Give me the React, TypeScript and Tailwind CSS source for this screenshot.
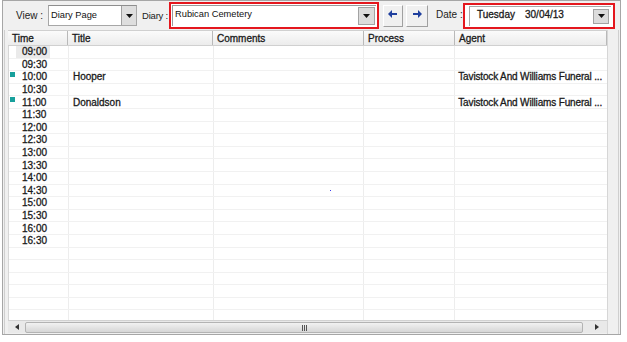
import React from "react";

const TIMES = [
  "09:00","09:30","10:00","10:30","11:00","11:30","12:00","12:30",
  "13:00","13:30","14:00","14:30","15:00","15:30","16:00","16:30",
];
const AGENT = "Tavistock And Williams Funeral ...";
const DATA: Record<string, { title: string; agent: string }> = {
  "10:00": { title: "Hooper", agent: AGENT },
  "11:00": { title: "Donaldson", agent: AGENT },
};
const TOTAL_ROWS = 22;

function DownTri() {
  return (
    <svg width="7" height="4" viewBox="0 0 7 4">
      <polygon points="0,0 7,0 3.5,4" fill="#111" />
    </svg>
  );
}

function Arrow({ dir }: { dir: "left" | "right" }) {
  return (
    <svg width="10" height="8" viewBox="0 0 10 8">
      {dir === "left" ? (
        <g fill="#1f3f9e">
          <polygon points="0,4 4,0 4,8" />
          <rect x="3" y="3" width="6" height="2" />
        </g>
      ) : (
        <g fill="#1f3f9e">
          <polygon points="10,4 6,0 6,8" />
          <rect x="1" y="3" width="6" height="2" />
        </g>
      )}
    </svg>
  );
}

const strong = "text-[10px] leading-none text-[#1a1a1a] [-webkit-text-stroke:0.3px_#1a1a1a] whitespace-nowrap";
const label = "text-[10px] leading-none text-[#222] whitespace-nowrap";

export default function App() {
  const rows = Array.from({ length: TOTAL_ROWS }, (_, i) => TIMES[i] ?? "");
  return (
    <div className="w-[627px] h-[342px] bg-white font-['Liberation_Sans',Arial,sans-serif]">
      <div className="ml-[2px] w-[619px] h-[335px] border border-[#a6a6a6] bg-[#f0f0f0] flex flex-col">
        {/* Toolbar */}
        <div className="h-[29px] flex items-center">
          <div className={`ml-[13px] w-[32px] ${label}`}>View :</div>
          <div className="w-[89px] h-[21px] bg-white border border-[#a7a7a7] border-t-[#8e8e8e] flex items-stretch">
            <div className="flex-1 pl-[2px] flex items-center text-[9.3px] text-[#111] whitespace-nowrap">Diary Page</div>
            <div className="w-[15px] bg-[#dedede] border-l border-[#a0a0a0] flex items-center justify-center">
              <DownTri />
            </div>
          </div>
          <div className="ml-[5px] w-[27px] text-[9.5px] tracking-[-0.2px] leading-none text-[#222] whitespace-nowrap">Diary :</div>
          <div className="w-[210px] h-[27px] border-2 border-[#e4171e] bg-white flex p-[1px]">
            <div className="flex-1 border-l border-t border-[#9a9a9a] flex items-stretch">
              <div className="flex-1 pl-[2px] pb-[3px] flex items-center text-[9.3px] text-[#111] whitespace-nowrap">Rubican Cemetery</div>
              <div className="w-[17px] my-[1px] mr-[1px] bg-[#dcdcdc] border border-[#a3a3a3] flex items-center justify-center">
                <DownTri />
              </div>
            </div>
          </div>
          <div className="ml-[4px] w-[20px] h-[22px] bg-[#f0f0f0] border border-t-white border-l-white border-r-[#a0a0a0] border-b-[#a0a0a0] flex items-center justify-center pb-[4px]">
            <Arrow dir="left" />
          </div>
          <div className="ml-[3px] w-[22px] h-[22px] bg-[#f0f0f0] border border-t-white border-l-white border-r-[#a0a0a0] border-b-[#a0a0a0] flex items-center justify-center pb-[4px]">
            <Arrow dir="right" />
          </div>
          <div className={`ml-[8px] w-[27px] pb-[2px] ${label}`}>Date :</div>
          <div className="w-[152px] h-[26px] border-2 border-[#e4171e] bg-white flex pl-[4px] pr-[2px] py-[1px]">
            <div className="flex-1 border-l border-t border-[#a8a8a8] flex items-stretch">
              <div className={`flex-1 pl-[7px] pb-[2px] flex items-center ${strong}`}>
                <span>Tuesday</span>
                <span className="ml-[10px]">30/04/13</span>
              </div>
              <div className="w-[16px] my-[2px] mr-[2px] bg-[#dcdcdc] border border-[#a3a3a3] flex items-center justify-center">
                <DownTri />
              </div>
            </div>
          </div>
        </div>

        {/* Grid frame */}
        <div className="flex-1 ml-[1px] mr-[1px] border-l border-r border-[#cfcfcf] flex">
          <div className="ml-[3px] w-[599px] flex flex-col">
            {/* Header */}
            <div className="h-[16px] flex border-t border-b border-[#d0d0d0] bg-linear-to-b from-[#fbfbfb] to-[#ececec]">
              {[
                ["Time", 60],
                ["Title", 145],
                ["Comments", 151],
                ["Process", 91],
                ["Agent", 152],
              ].map(([t, w]) => (
                <div
                  key={t as string}
                  style={{ width: w as number }}
                  className={`flex items-center pl-[4px] pt-[1px] border-r border-[#b9b9b9] ${strong}`}
                >
                  {t}
                </div>
              ))}
            </div>
            {/* Body */}
            <div className="h-[274px] bg-white overflow-hidden border-l border-[#d6d6d6]">
              {rows.map((t, i) => {
                const d = DATA[t];
                return (
                  <div key={i} className="h-[12.6px] flex border-b border-[#f1f1f1]">
                    <div className="w-[60px] flex border-r border-[#ededed]">
                      <div className="w-[7px] pl-[1px] pt-[1px]">
                        {d && <div className="w-[5px] h-[5px] bg-[#18a09c]" />}
                      </div>
                      <div className={`w-[34px] pl-[6px] pt-[1px] flex items-center ${i === 0 ? "bg-[#eaeaea]" : ""} ${strong}`}>
                        {t}
                      </div>
                    </div>
                    <div className={`w-[145px] pl-[4px] pt-[1px] flex items-center border-r border-[#ededed] ${strong}`}>
                      {d?.title}
                    </div>
                    <div className="w-[151px] flex items-center border-r border-[#ededed]">
                      {t === "14:30" && <div className="ml-[116px] w-[1px] h-[1px] bg-[#3b3bf0]" />}
                    </div>
                    <div className="w-[91px] border-r border-[#ededed]" />
                    <div className={`w-[152px] pl-[3px] pt-[1px] flex items-center overflow-hidden tracking-[-0.15px] ${strong}`}>
                      {d?.agent}
                    </div>
                  </div>
                );
              })}
            </div>
            {/* Horizontal scrollbar */}
            <div className="h-[13px] flex items-stretch bg-[#e9e9e9] border-t border-[#d2d2d2]">
              <div className="w-[17px] flex items-center justify-center">
                <svg width="4" height="6" viewBox="0 0 4 6">
                  <polygon points="4,0 4,6 0,3" fill="#333" />
                </svg>
              </div>
              <div className="w-[558px] mt-[1px] rounded-[2px] border border-[#b3b3b3] bg-linear-to-b from-[#f2f2f2] to-[#d6d6d6] flex items-center justify-center">
                <div className="flex gap-[1px]">
                  <div className="w-[1px] h-[6px] bg-[#555]" />
                  <div className="w-[1px] h-[6px] bg-[#555]" />
                  <div className="w-[1px] h-[6px] bg-[#555]" />
                </div>
              </div>
              <div className="flex-1 flex items-center justify-center pl-[4px]">
                <svg width="4" height="6" viewBox="0 0 4 6">
                  <polygon points="0,0 0,6 4,3" fill="#333" />
                </svg>
              </div>
            </div>
          </div>
          <div className="flex-1 border-l border-[#d6d6d6]" />
        </div>
      </div>
    </div>
  );
}
